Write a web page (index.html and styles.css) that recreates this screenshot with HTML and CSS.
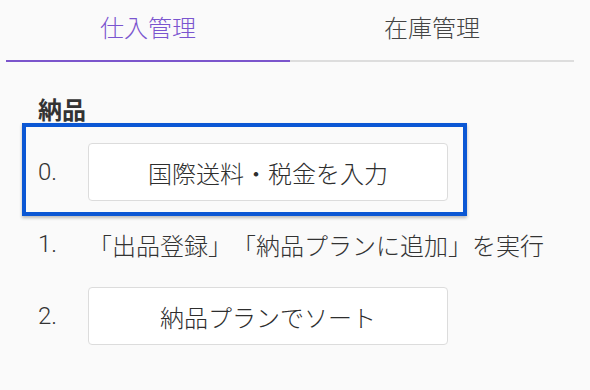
FILE: index.html
```html
<!DOCTYPE html>
<html>
  <head>
    <meta charset="UTF-8">
    <title>仕入管理</title>
    <link rel="stylesheet" href="styles.css">
  </head>
  <body>
    <div class="tabs">
      <div class="tab active">仕入管理</div>
      <div class="tab">在庫管理</div>
    </div>

    <div class="panel">
      <h2 class="section-title">納品</h2>
      <ol class="steps">
        <li class="step highlighted">
          <span class="step-num">0.</span>
          <button class="step-button">国際送料・税金を入力</button>
        </li>
        <li class="step">
          <span class="step-num">1.</span>
          <span class="step-text">「出品登録」「納品プランに追加」を実行</span>
        </li>
        <li class="step">
          <span class="step-num">2.</span>
          <button class="step-button">納品プランでソート</button>
        </li>
      </ol>
    </div>
  </body>
</html>
```

FILE: styles.css
```css
body {
  margin: 0;
  background-color: #fafafa;
  font-family: Roboto, "Noto Sans CJK JP", sans-serif;
  font-weight: 300;
  color: #333;
  text-spacing-trim: space-all;
}

.tabs {
  display: flex;
  margin: 0 16px 0 6px;
}

.tab {
  flex: 1;
  text-align: center;
  font-size: 24px;
  line-height: 24px;
  padding: 17px 0 19px;
  color: #444;
  border-bottom: 2px solid #dddddd;
}

.tab.active {
  color: #7a55cf;
  border-bottom-color: #7b55cc;
}

.panel {
  padding: 37px 0 0 38px;
}

.section-title {
  margin: 0;
  font-size: 24px;
  line-height: 24px;
  font-weight: bold;
  color: #333;
}

.steps {
  list-style: none;
  margin: 20px 0 0;
  padding: 0;
  display: flex;
  flex-direction: column;
  gap: 14px;
}

.step {
  display: flex;
  align-items: center;
  height: 58px;
  font-size: 24px;
}

.step-num {
  width: 50px;
  flex: none;
}

.step-text {
  white-space: nowrap;
}

.step-button {
  width: 360px;
  height: 58px;
  background-color: #fff;
  border: 1px solid #dcdcdc;
  border-radius: 4px;
  font-family: inherit;
  font-weight: inherit;
  font-size: 24px;
  color: #2e2e2e;
  padding: 0;
  cursor: pointer;
  text-spacing-trim: space-all;
}

.highlighted {
  position: relative;
  width: 410px;
}

/* annotation box drawn over the first step */
.highlighted::after {
  content: "";
  position: absolute;
  top: -20px;
  left: -16px;
  right: -19px;
  bottom: -15px;
  border: 4px solid #0b57d4;
  box-shadow: 0 2px 3px rgba(0, 0, 0, 0.25);
  pointer-events: none;
}
```
